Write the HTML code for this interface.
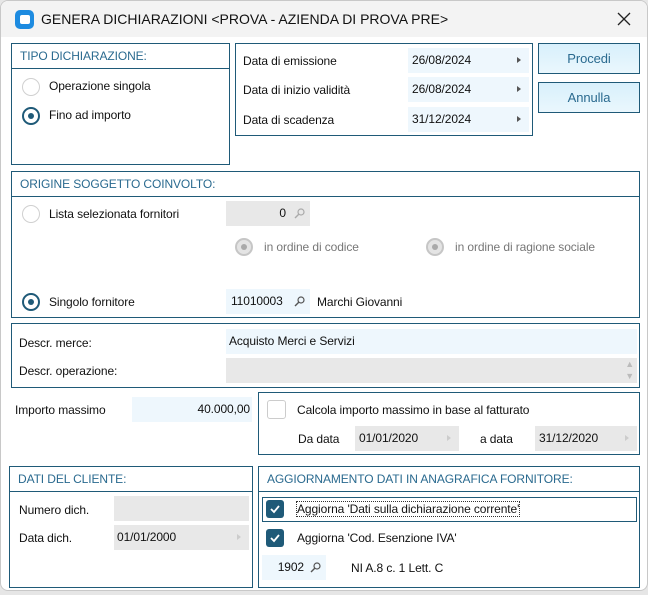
<!DOCTYPE html>
<html><head><meta charset="utf-8"><style>
*{box-sizing:border-box;margin:0;padding:0}
body{width:648px;height:595px;background:#e6e6e6;font-family:"Liberation Sans",sans-serif;font-size:12px;color:#111;position:relative;overflow:hidden;letter-spacing:-0.1px}
.win{position:absolute;left:0;top:0;width:648px;height:591px;background:#fff;border:1px solid #c8c8c8;border-radius:8px;overflow:hidden}
.in{position:absolute;left:-1px;top:-1px;width:648px;height:591px}
.title{position:absolute;left:0;top:0;width:648px;height:37px;background:#f3f3f3}
.a{position:absolute}
.box{position:absolute;border:1px solid #1f5a78}
.hd{position:absolute;left:0;right:0;top:0;height:25px;border-bottom:1px solid #1f5a78;color:#2a6a8f;padding:5px 0 0 8px}
.t{position:absolute;white-space:nowrap;line-height:14px}
.f{position:absolute;height:25px;background:#eef7fd;line-height:25px;white-space:nowrap}
.g{background:#e8e8e8}
.rad{position:absolute;width:18px;height:18px;border-radius:50%;border:1.5px solid #d0d0d0;background:#fff}
.rad.on{border:2px solid #1f5a78}
.rad.on::after{content:"";position:absolute;left:4px;top:4px;width:6px;height:6px;border-radius:50%;background:#1f5a78}
.rad.dis{border:2px solid #c6c6c6;background:#e4e4e4}
.rad.dis::after{content:"";position:absolute;left:4px;top:4px;width:6px;height:6px;border-radius:50%;background:#aaa}
.arr{position:absolute;right:8px;top:9px;width:0;height:0;border-left:4px solid #555;border-top:3.5px solid transparent;border-bottom:3.5px solid transparent}
.arr.l{border-left-color:#ccc}
.btn{position:absolute;border:1px solid #1f5a78;background:linear-gradient(#d8f0fc,#eaf7fd);color:#2a6a8f;text-align:center;font-size:13px;line-height:29px}
.cb{position:absolute;width:18px;height:18px;border-radius:3px;background:#1f5a78}
.cb svg{position:absolute;left:3px;top:3px}
.srch{position:absolute;right:5px;top:7px}
</style></head><body>
<div class="win"><div class="in">
<div class="title">
 <div class="a" style="left:15px;top:10px;width:19px;height:19px;background:#1d8be0;border-radius:5px"><div class="a" style="left:5px;top:5px;width:10px;height:9px;background:#fff;border-radius:2px"></div></div>
 <div class="t" style="left:41px;top:11px;font-size:14px;line-height:17px;letter-spacing:0">GENERA DICHIARAZIONI &lt;PROVA - AZIENDA DI PROVA PRE&gt;</div>
 <svg class="a" style="left:617px;top:12px" width="14" height="14"><path d="M1 1L13 13M13 1L1 13" stroke="#222" stroke-width="1.3"/></svg>
</div>

<div class="box" style="left:11px;top:43px;width:219px;height:122px">
 <div class="hd">TIPO DICHIARAZIONE:</div>
 <div class="rad" style="left:10px;top:34px"></div><div class="t" style="left:37px;top:35px">Operazione singola</div>
 <div class="rad on" style="left:10px;top:63px"></div><div class="t" style="left:37px;top:64px">Fino ad importo</div>
</div>

<div class="box" style="left:235px;top:43px;width:298px;height:93px">
 <div class="t" style="left:7px;top:10px">Data di emissione</div>
 <div class="f" style="left:172px;top:4px;width:121px;padding-left:4px">26/08/2024<span class="arr"></span></div>
 <div class="t" style="left:7px;top:39px">Data di inizio validità</div>
 <div class="f" style="left:172px;top:33px;width:121px;padding-left:4px">26/08/2024<span class="arr"></span></div>
 <div class="t" style="left:7px;top:69px">Data di scadenza</div>
 <div class="f" style="left:172px;top:63px;width:121px;padding-left:4px">31/12/2024<span class="arr"></span></div>
</div>

<div class="btn" style="left:538px;top:43px;width:102px;height:31px">Procedi</div>
<div class="btn" style="left:538px;top:82px;width:102px;height:31px">Annulla</div>

<div class="box" style="left:11px;top:171px;width:629px;height:147px">
 <div class="hd">ORIGINE SOGGETTO COINVOLTO:</div>
 <div class="rad" style="left:10px;top:33px"></div><div class="t" style="left:37px;top:35px">Lista selezionata fornitori</div>
 <div class="f g" style="left:214px;top:29px;width:84px;text-align:right;padding-right:24px">0<svg class="srch" width="11" height="11"><circle cx="7" cy="4" r="3" stroke="#aaa" stroke-width="1.2" fill="none"/><path d="M5 6L1 10" stroke="#aaa" stroke-width="1.4"/></svg></div>
 <div class="rad dis" style="left:223px;top:66px"></div><div class="t" style="left:252px;top:68px;color:#777">in ordine di codice</div>
 <div class="rad dis" style="left:414px;top:66px;"></div><div class="t" style="left:443px;top:68px;color:#777">in ordine di ragione sociale</div>
 <div class="rad on" style="left:10px;top:121px"></div><div class="t" style="left:37px;top:123px">Singolo fornitore</div>
 <div class="f" style="left:214px;top:117px;width:84px;padding-left:5px">11010003<svg class="srch" width="11" height="11"><circle cx="7" cy="4" r="3" stroke="#555" stroke-width="1.2" fill="none"/><path d="M5 6L1 10" stroke="#555" stroke-width="1.4"/></svg></div>
 <div class="t" style="left:305px;top:123px">Marchi Giovanni</div>
</div>

<div class="box" style="left:11px;top:323px;width:629px;height:65px">
 <div class="t" style="left:7px;top:12px">Descr. merce:</div>
 <div class="f" style="left:214px;top:5px;width:411px;padding-left:3px">Acquisto Merci e Servizi</div>
 <div class="t" style="left:7px;top:40px">Descr. operazione:</div>
 <div class="f g" style="left:214px;top:34px;width:411px"><span class="a" style="right:3px;top:-6px;color:#bbb;font-size:9px">&#9650;</span><span class="a" style="right:3px;top:6px;color:#bbb;font-size:9px">&#9660;</span></div>
</div>

<div class="t" style="left:15px;top:403px">Importo massimo</div>
<div class="f" style="left:132px;top:397px;width:120px;text-align:right;padding-right:2px">40.000,00</div>

<div class="box" style="left:258px;top:392px;width:382px;height:63px">
 <div class="a" style="left:8px;top:7px;width:19px;height:19px;border:1.5px solid #ccc;border-radius:3px"></div>
 <div class="t" style="left:38px;top:10px">Calcola importo massimo in base al fatturato</div>
 <div class="t" style="left:39px;top:39px">Da data</div>
 <div class="f g" style="left:96px;top:33px;width:104px;padding-left:4px">01/01/2020<span class="arr l"></span></div>
 <div class="t" style="left:221px;top:39px">a data</div>
 <div class="f g" style="left:276px;top:33px;width:102px;padding-left:4px">31/12/2020<span class="arr l"></span></div>
</div>

<div class="box" style="left:9px;top:466px;width:244px;height:122px">
 <div class="hd">DATI DEL CLIENTE:</div>
 <div class="t" style="left:9px;top:36px">Numero dich.</div>
 <div class="f g" style="left:104px;top:29px;width:135px"></div>
 <div class="t" style="left:9px;top:64px">Data dich.</div>
 <div class="f g" style="left:104px;top:58px;width:135px;padding-left:3px">01/01/2000<span class="arr l"></span></div>
</div>

<div class="box" style="left:258px;top:466px;width:382px;height:122px">
 <div class="hd">AGGIORNAMENTO DATI IN ANAGRAFICA FORNITORE:</div>
 <div class="a" style="left:3px;top:30px;width:375px;height:25px;border:1px solid #1f5a78"></div>
 <div class="cb" style="left:7px;top:33px"><svg width="12" height="12"><path d="M2 6l3 3 5-6" stroke="#fff" stroke-width="1.8" fill="none"/></svg></div>
 <div class="t" style="left:38px;top:35px;outline:1px dotted #333">Aggiorna 'Dati sulla dichiarazione corrente'</div>
 <div class="cb" style="left:7px;top:62px"><svg width="12" height="12"><path d="M2 6l3 3 5-6" stroke="#fff" stroke-width="1.8" fill="none"/></svg></div>
 <div class="t" style="left:38px;top:64px">Aggiorna 'Cod. Esenzione IVA'</div>
 <div class="f" style="left:3px;top:88px;width:64px;text-align:right;padding-right:22px">1902<svg class="srch" width="11" height="11"><circle cx="7" cy="4" r="3" stroke="#555" stroke-width="1.2" fill="none"/><path d="M5 6L1 10" stroke="#555" stroke-width="1.4"/></svg></div>
 <div class="t" style="left:92px;top:94px">NI A.8 c. 1 Lett. C</div>
</div>
</div></div>
</body></html>
